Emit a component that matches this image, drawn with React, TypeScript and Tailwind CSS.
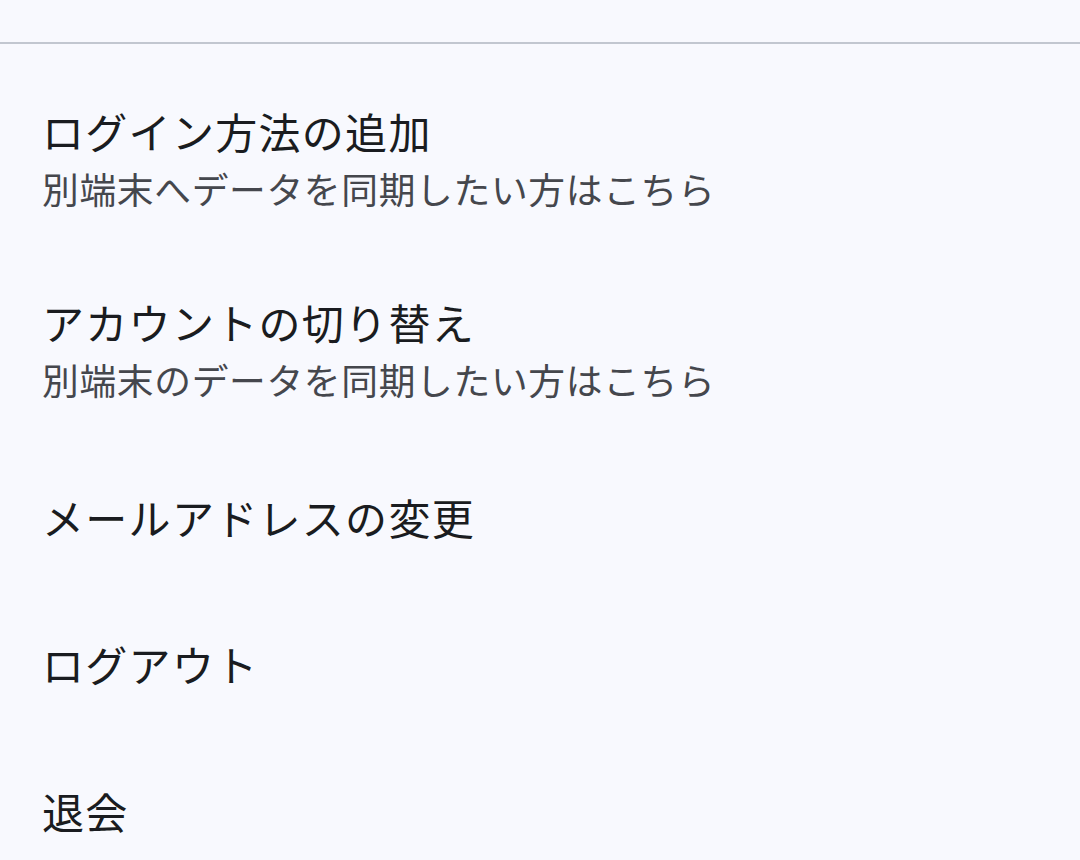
import React from 'react';

interface MenuItem {
  title: string;
  subtitle?: string;
}

const items: MenuItem[] = [
  { title: 'ログイン方法の追加', subtitle: '別端末へデータを同期したい方はこちら' },
  { title: 'アカウントの切り替え', subtitle: '別端末のデータを同期したい方はこちら' },
  { title: 'メールアドレスの変更' },
  { title: 'ログアウト' },
  { title: '退会' },
];

function Row({ item }: { item: MenuItem }) {
  return (
    <button
      type="button"
      className={`flex w-full flex-col justify-center px-[42px] text-left ${
        item.subtitle ? 'h-[191px]' : 'h-[147px]'
      }`}
    >
      <span className="text-[42px] leading-[63px] tracking-[1.3px] text-[#1a1c20]">{item.title}</span>
      {item.subtitle && (
        <span className="text-[36.75px] leading-[52.5px] tracking-[0.66px] text-[#45474d]">
          {item.subtitle}
        </span>
      )}
    </button>
  );
}

export default function App() {
  return (
    <div
      className="min-h-[860px] w-full overflow-hidden bg-[#f8f9fe]"
      style={{ fontFamily: '"Noto Sans CJK JP", "Noto Sans", sans-serif' }}
    >
      {/* toolbar area above the list */}
      <div className="h-[42px]" />
      <div className="h-[2px] bg-[#c2c7d0]" />

      <div className="flex flex-col pt-[17px]">
        {items.map(item => (
          <Row key={item.title} item={item} />
        ))}
      </div>
    </div>
  );
}
